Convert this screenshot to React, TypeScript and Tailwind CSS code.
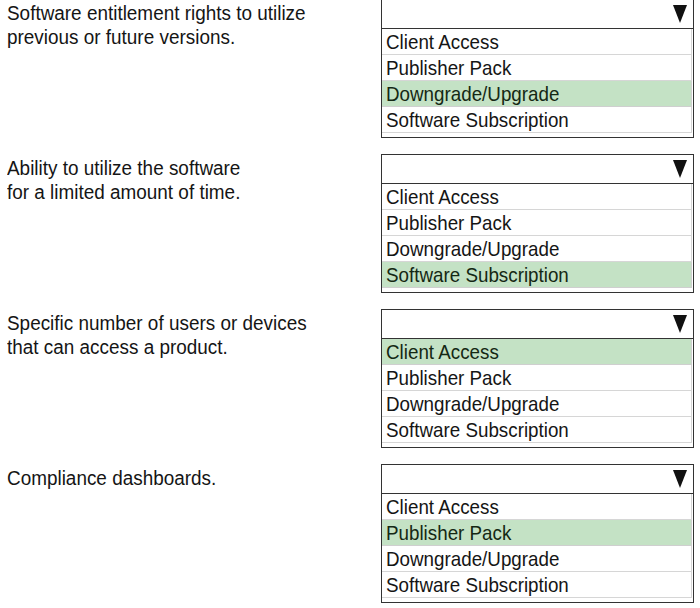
const OPTIONS = ['Client Access', 'Publisher Pack', 'Downgrade/Upgrade', 'Software Subscription']

const ITEMS: { lines: string[]; answer: string }[] = [
  { lines: ['Software entitlement rights to utilize', 'previous or future versions.'], answer: 'Downgrade/Upgrade' },
  { lines: ['Ability to utilize the software', 'for a limited amount of time.'], answer: 'Software Subscription' },
  { lines: ['Specific number of users or devices', 'that can access a product.'], answer: 'Client Access' },
  { lines: ['Compliance dashboards.'], answer: 'Publisher Pack' },
]

function Caret() {
  return (
    <svg width="14" height="18" viewBox="0 0 14 18" className="block">
      <polygon points="0,0 14,0 7,18" fill="#111" />
    </svg>
  )
}

function Dropdown({ answer }: { answer: string }) {
  return (
    <div className="w-[313px] h-[139px] border border-[#333] bg-white flex flex-col shrink-0">
      {/* closed select header */}
      <div className="h-[29px] border-b border-[#333] flex items-center justify-end pr-[6px] shrink-0">
        <Caret />
      </div>
      <div className="flex flex-col mr-[1px]">
        {OPTIONS.map(opt => {
          const on = opt === answer
          return (
            <div
              key={opt}
              className={
                on
                  ? 'h-[26px] border-b border-r border-[#cfcfcf] bg-[#c4e2c5] text-[#142814] pl-[4px] text-[21px] leading-[26px] whitespace-nowrap'
                  : 'h-[26px] border-b border-r border-[#d6d6d6] bg-white text-[#151515] pl-[4px] text-[21px] leading-[26px] whitespace-nowrap'
              }
            >
              <span className="inline-block origin-left scale-x-[0.895]">{opt}</span>
            </div>
          )
        })}
      </div>
    </div>
  )
}

export default function App() {
  return (
    <div
      className="w-[700px] h-[608px] bg-white overflow-hidden"
      style={{ fontFamily: '"Liberation Sans", Arial, sans-serif' }}
    >
      <div className="flex flex-col gap-[16px] -mt-px">
        {ITEMS.map((item, i) => (
          <div key={i} className="flex">
            <div className="w-[381px] shrink-0 pl-[7px] pt-[2px] text-[19.5px] leading-[24px] text-[#151515]">
              <div className="origin-left scale-x-[0.97] whitespace-nowrap">
                {item.lines.map(l => (
                  <div key={l}>{l}</div>
                ))}
              </div>
            </div>
            <Dropdown answer={item.answer} />
          </div>
        ))}
      </div>
    </div>
  )
}
